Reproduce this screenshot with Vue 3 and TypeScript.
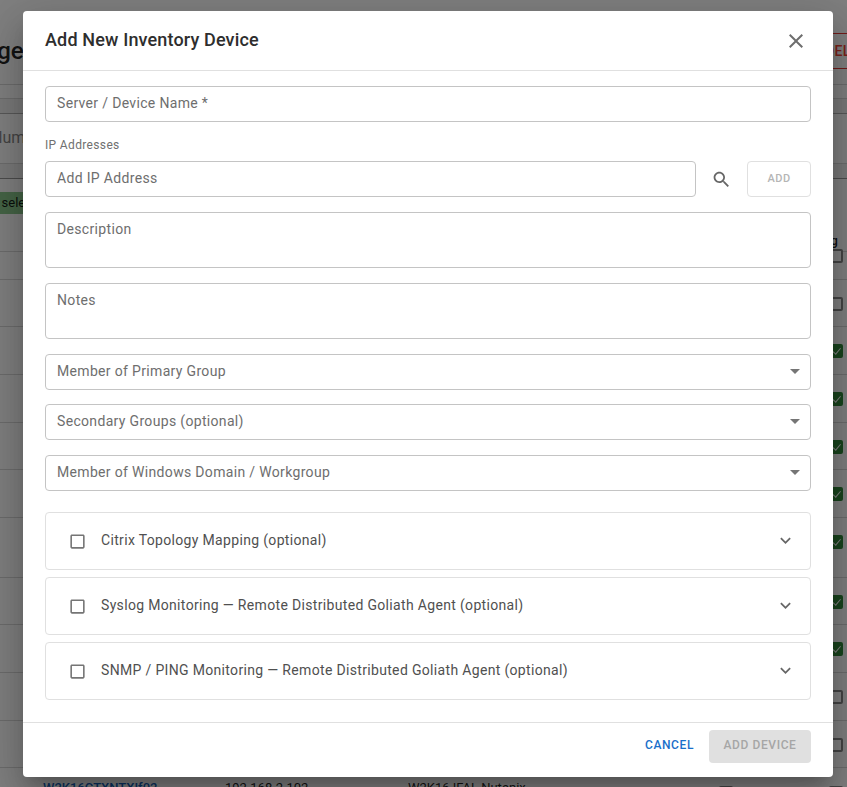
<script setup lang="ts">
// Add device dialog over the dimmed inventory page
const fields = ['Member of Primary Group', 'Secondary Groups (optional)', 'Member of Windows Domain / Workgroup']
const sections = [
  'Citrix Topology Mapping (optional)',
  'Syslog Monitoring — Remote Distributed Goliath Agent (optional)',
  'SNMP / PING Monitoring — Remote Distributed Goliath Agent (optional)',
]
const rows = [
  { h: 47, on: false },
  { h: 48, on: true },
  { h: 48, on: true },
  { h: 47, on: true },
  { h: 48, on: true },
  { h: 60, on: true },
  { h: 47, on: true },
  { h: 48, on: true },
  { h: 48, on: false },
  { h: 47, on: false },
]
</script>

<template>
  <div class="page">
    <div class="page-head">
      <h1 class="page-title">Manage</h1>
      <div class="del-btn">DELETE</div>
    </div>
    <div class="band thin" />
    <div class="band dark" />
    <div class="filter"><span>Columns</span></div>
    <div class="band darker" />
    <div class="sel-row">
      <span class="chip">0 selected</span>
      <span class="col-label">Log</span>
    </div>
    <div class="col-head"><i class="box" /></div>
    <div v-for="(r, i) in rows" :key="i" class="row" :style="{ height: r.h + 'px' }">
      <i class="box" :class="{ on: r.on }" />
    </div>
    <div class="last-row">
      <span class="l-name">W2K16CTXNTXIf02</span>
      <span class="l-ip">192.168.2.102</span>
      <span class="l-desc">W2K16 IFAL Nutanix</span>
      <i class="box mid" />
      <i class="box" />
    </div>
    <div class="scrim" />

    <section class="dialog">
      <header class="dlg-head">
        <h2>Add New Inventory Device</h2>
        <svg class="close" viewBox="0 0 24 24" width="24" height="24">
          <path d="M19 6.41 17.59 5 12 10.59 6.41 5 5 6.41 10.59 12 5 17.59 6.41 19 12 13.41 17.59 19 19 17.59 13.41 12z" />
        </svg>
      </header>

      <div class="dlg-body">
        <div class="field h36"><span>Server / Device Name *</span></div>
        <div class="ip-label">IP Addresses</div>
        <div class="ip-row">
          <div class="field h36 grow"><span>Add IP Address</span></div>
          <svg class="search" viewBox="0 0 24 24" width="21" height="21">
            <path d="M15.5 14h-.79l-.28-.27C15.41 12.59 16 11.11 16 9.5 16 5.91 13.09 3 9.5 3S3 5.91 3 9.5 5.91 16 9.5 16c1.61 0 3.09-.59 4.23-1.57l.27.28v.79l5 4.99L20.49 19l-4.99-5zm-6 0C7.01 14 5 11.99 5 9.5S7.01 5 9.5 5 14 7.01 14 9.5 11.99 14 9.5 14z" />
          </svg>
          <div class="add-btn">ADD</div>
        </div>
        <div class="field area"><span>Description</span></div>
        <div class="field area"><span>Notes</span></div>
        <div v-for="f in fields" :key="f" class="field h36 select">
          <span>{{ f }}</span>
          <svg viewBox="0 0 24 24" width="24" height="24"><path d="M7 10l5 5 5-5z" /></svg>
        </div>
        <div class="accordions">
          <div v-for="s in sections" :key="s" class="acc">
            <svg class="cb" viewBox="0 0 24 24" width="19" height="19">
              <path d="M19 5v14H5V5h14m0-2H5c-1.1 0-2 .9-2 2v14c0 1.1.9 2 2 2h14c1.1 0 2-.9 2-2V5c0-1.1-.9-2-2-2z" />
            </svg>
            <span class="acc-title">{{ s }}</span>
            <svg class="chev" viewBox="0 0 24 24" width="21" height="21">
              <path d="M16.59 8.59 12 13.17 7.41 8.59 6 10l6 6 6-6z" />
            </svg>
          </div>
        </div>
      </div>

      <footer class="dlg-foot">
        <span class="cancel">CANCEL</span>
        <span class="submit">ADD DEVICE</span>
      </footer>
    </section>
  </div>
</template>

<style>
html,
body {
  margin: 0;
  overflow: hidden;
}
</style>

<style scoped>
.page {
  position: relative;
  width: 847px;
  height: 787px;
  overflow: hidden;
  background: #fff;
  font-family: Roboto, "Liberation Sans", sans-serif;
  color: rgba(0, 0, 0, 0.87);
}
.page-head {
  height: 85px;
  box-sizing: border-box;
  border-bottom: 1px solid #d8d8d8;
  display: flex;
  justify-content: space-between;
  align-items: center;
  padding-top: 17px;
}
.page-title {
  margin: 0 0 0 -63px;
  font-size: 24px;
  font-weight: 500;
}
.del-btn {
  box-sizing: border-box;
  height: 36px;
  width: 100px;
  margin-right: -53px;
  margin-top: 1px;
  border: 1px solid #e53935;
  color: #f44336;
  font-size: 14px;
  font-weight: 500;
  line-height: 34px;
  padding-left: 24px;
  letter-spacing: 0.4px;
}
.band {
  height: 15px;
  box-sizing: border-box;
  background: #f2f2f2;
  border-bottom: 1px solid #d8d8d8;
}
.band.thin {
  height: 14px;
  background: #fff;
}
.band.dark {
  border-bottom-color: #b0b0b0;
}
.band.darker {
  border-bottom-color: #999;
}
.filter {
  height: 50px;
  box-sizing: border-box;
  border-bottom: 1px solid #d8d8d8;
  font-size: 16px;
  line-height: 48px;
  color: #888;
  margin-left: -21px;
}
.sel-row {
  position: relative;
  height: 73px;
  box-sizing: border-box;
  padding-top: 13px;
  border-bottom: 1px solid #d8d8d8;
}
.chip {
  display: block;
  width: 60px;
  height: 22px;
  margin-left: -22px;
  padding-left: 13px;
  background: #8ac98d;
  font-size: 13px;
  line-height: 22px;
  white-space: nowrap;
}
.col-label {
  position: absolute;
  right: 9px;
  top: 54px;
  font-size: 13px;
  font-weight: 500;
}
.col-head {
  height: 28px;
  box-sizing: border-box;
  border-bottom: 1px solid #d8d8d8;
  position: relative;
}
.row {
  box-sizing: border-box;
  border-bottom: 1px solid #d8d8d8;
  position: relative;
}
.box {
  position: absolute;
  right: 4px;
  top: 17px;
  box-sizing: border-box;
  width: 14px;
  height: 14px;
  border: 2px solid #8a8a8a;
  border-radius: 2px;
  background: #fff;
}
.col-head .box {
  top: -3px;
}
.box.on {
  background: #33883a;
  border-color: #33883a;
}
.box.on::after {
  content: "";
  position: absolute;
  left: 3px;
  top: 0;
  width: 4px;
  height: 7px;
  border: solid #fff;
  border-width: 0 1.5px 1.5px 0;
  transform: rotate(40deg);
}
.box.mid {
  right: 114px;
}
.last-row {
  position: relative;
  height: 30px;
  font-size: 13px;
}
.last-row .box {
  top: 18px;
}
.last-row span {
  position: absolute;
  top: 12px;
  white-space: nowrap;
}
.l-name {
  left: 43px;
  color: #1565c0;
  font-weight: 500;
}
.l-ip {
  left: 225px;
}
.l-desc {
  left: 408px;
}
.scrim {
  position: absolute;
  inset: 0;
  background: rgba(0, 0, 0, 0.5);
}
.dialog {
  position: absolute;
  left: 23px;
  top: 11px;
  width: 810px;
  height: 766px;
  display: flex;
  flex-direction: column;
  background: #fff;
  border-radius: 4px;
  box-shadow: 0 11px 15px -7px rgba(0, 0, 0, 0.2), 0 24px 38px 3px rgba(0, 0, 0, 0.14), 0 9px 46px 8px rgba(0, 0, 0, 0.12);
}
.dlg-head {
  height: 59px;
  flex: none;
  border-bottom: 1px solid #e0e0e0;
  display: flex;
  align-items: center;
  justify-content: space-between;
  padding: 0 25px 0 22px;
}
.dlg-head h2 {
  margin: -2px 0 0;
  font-size: 18px;
  font-weight: 500;
  letter-spacing: 0.15px;
  color: #2e2e2e;
}
.close {
  fill: #6e6e6e;
  margin-top: 1px;
}
.dlg-body {
  flex: 1;
  padding: 15px 22px 0;
  display: flex;
  flex-direction: column;
}
.field {
  box-sizing: border-box;
  border: 1px solid #c4c4c4;
  border-radius: 4px;
  padding: 0 11px;
  font-size: 14px;
  letter-spacing: 0.33px;
  color: #6e6e6e;
  display: flex;
  align-items: center;
}
.h36 {
  height: 36px;
  flex: none;
  padding-bottom: 2px;
}
.grow {
  flex: 1;
}
.ip-label {
  margin-top: 15px;
  height: 17px;
  font-size: 12px;
  line-height: 16px;
  letter-spacing: 0.35px;
  color: #707070;
}
.ip-row {
  margin-top: 7px;
  display: flex;
  align-items: center;
}
.search {
  fill: #666;
  flex: none;
  margin: 0 15px;
}
.add-btn {
  box-sizing: border-box;
  width: 64px;
  height: 36px;
  border: 1px solid #e0e0e0;
  border-radius: 4px;
  text-align: center;
  font-size: 11px;
  font-weight: 500;
  line-height: 34px;
  letter-spacing: 0.5px;
  color: #b5b5b5;
}
.area {
  height: 56px;
  margin-top: 15px;
  align-items: flex-start;
  padding-top: 8px;
}
.select {
  margin-top: 14.5px;
  justify-content: space-between;
  padding-right: 3px;
}
.select svg {
  fill: #757575;
}
.accordions {
  margin-top: 21.5px;
  display: flex;
  flex-direction: column;
  gap: 7px;
}
.acc {
  box-sizing: border-box;
  height: 58px;
  border: 1px solid #e0e0e0;
  border-radius: 4px;
  display: flex;
  align-items: center;
  padding: 0 14px 0 22px;
  font-size: 14px;
  letter-spacing: 0.33px;
  color: #505050;
}
.cb {
  fill: #757575;
  flex: none;
}
.acc-title {
  flex: 1;
  margin-left: 14px;
  margin-top: -2px;
}
.chev {
  fill: #666;
  margin-top: -2px;
}
.dlg-foot {
  height: 54px;
  box-sizing: content-box;
  flex: none;
  border-top: 1px solid #e0e0e0;
  display: flex;
  align-items: flex-start;
  justify-content: flex-end;
  gap: 15px;
  padding: 0 22px 0 0;
}
.cancel {
  margin-top: 7px;
  line-height: 31px;
  font-size: 12px;
  font-weight: 500;
  letter-spacing: 0.6px;
  color: #1a6fca;
}
.submit {
  margin-top: 7px;
  box-sizing: border-box;
  width: 102px;
  height: 33px;
  border-radius: 4px;
  background: #e0e0e0;
  text-align: center;
  line-height: 31px;
  font-size: 12px;
  font-weight: 500;
  letter-spacing: 0.6px;
  color: #a6a6a6;
}
</style>
